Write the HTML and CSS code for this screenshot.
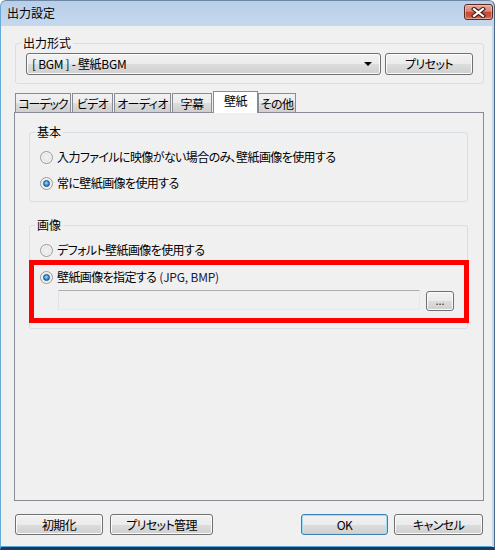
FILE: index.html
```html
<!DOCTYPE html>
<html lang="ja">
<head>
<meta charset="utf-8">
<title>出力設定</title>
<link rel="stylesheet" href="styles.css">
</head>
<body>
<div class="window">
  <div class="titlebar">
    <span class="title">出力設定</span>
    <div class="close">
      <svg width="17" height="11" viewBox="0 0 17 11">
        <path d="M4 2 L13 9 M13 2 L4 9" stroke="#3a1a14" stroke-width="4.2" stroke-linecap="square" fill="none"/>
        <path d="M4 2 L13 9 M13 2 L4 9" stroke="#ffffff" stroke-width="2.2" stroke-linecap="square" fill="none"/>
      </svg>
    </div>
  </div>
  <div class="client">
    <fieldset class="group top-group">
      <legend>出力形式</legend>
      <div class="format-row">
        <div class="combo">
          <span>[ BGM ] - 壁紙BGM</span>
          <span class="arrow"></span>
        </div>
        <div class="btn preset">プリセット</div>
      </div>
    </fieldset>

    <div class="tabs">
      <div class="tab w-codec">コーデック</div>
      <div class="tab w-video">ビデオ</div>
      <div class="tab w-audio">オーディオ</div>
      <div class="tab w-sub">字幕</div>
      <div class="tab selected">壁紙</div>
      <div class="tab w-other">その他</div>
    </div>
    <div class="panel">
      <fieldset class="group basic">
        <legend>基本</legend>
        <div class="radio-row"><span class="radio"></span><span>入力ファイルに映像がない場合のみ、壁紙画像を使用する</span></div>
        <div class="radio-row gap"><span class="radio checked"></span><span>常に壁紙画像を使用する</span></div>
      </fieldset>
      <fieldset class="group image">
        <legend>画像</legend>
        <div class="radio-row"><span class="radio"></span><span>デフォルト壁紙画像を使用する</span></div>
        <div class="radio-row gap2"><span class="radio checked"></span><span>壁紙画像を指定する<span class="ext">(JPG, BMP)</span></span></div>
        <div class="path-row">
          <div class="textbox"></div>
          <div class="btn browse">...</div>
        </div>
      </fieldset>
    </div>

    <div class="buttons">
      <div class="btn b-init">初期化</div>
      <div class="btn b-manage">プリセット管理</div>
      <div class="btn b-ok default">OK</div>
      <div class="btn b-cancel">キャンセル</div>
    </div>
  </div>
</div>
<div class="highlight"></div>
</body>
</html>
```
FILE: styles.css
```css
html, body {
  margin: 0;
  padding: 0;
  background: #ffffff;
}
body {
  width: 498px;
  height: 550px;
  position: relative;
  overflow: hidden;
  font-family: "Noto Sans CJK JP", "Noto Sans", sans-serif;
  font-size: 12px;
  line-height: 14px;
  letter-spacing: -0.6px;
  color: #000;
  font-feature-settings: "palt";
}
.window {
  width: 495px;
  height: 550px;
  box-sizing: border-box;
  display: flex;
  flex-direction: column;
  background: linear-gradient(#b9cfe8, #c5d9ee 26px, #c5d9ee);
  border-top: 1px solid #6c86a3;
  border-right: 1px solid #4c6783;
  border-left: 1px solid #69a9d8;
  border-bottom: 3px solid #1e3957;
  border-radius: 6px 6px 0 0;
}
.titlebar {
  height: 25px;
  display: flex;
  align-items: center;
  padding-left: 6px;
}
.title {
  font-size: 12px;
  line-height: 14px;
  margin-top: -1px;
  letter-spacing: 0;
}
.close {
  margin-left: auto;
  margin-right: 1px;
  margin-top: 3px;
  align-self: flex-start;
  width: 27px;
  height: 14px;
  border: 1px solid #5a2a22;
  border-radius: 3px;
  background: linear-gradient(#e4a79b 0%, #d98a7b 45%, #c24a36 50%, #c9543f 80%, #d97a62 100%);
  box-shadow: inset 0 0 0 1px rgba(255,220,210,0.45);
  display: flex;
  align-items: center;
  justify-content: center;
}
.close svg { display: block; }

.client {
  flex: 1;
  margin-right: 2px;
  background: #f0f0f0;
  border-bottom: 1px solid #56a7da;
  padding: 10px 8px 0 13px;
  display: flex;
  flex-direction: column;
}

.group {
  margin: 0;
  border: 1px solid #d5dfe5;
  border-radius: 3px;
  min-width: 0;
}
.group legend {
  padding: 0 2px;
  margin-left: -5px;
  line-height: 14px;
  letter-spacing: 0;
}
.top-group {
  margin-left: 1px;
  padding: 3px 9px 8px 10px;
}
.format-row {
  display: flex;
  gap: 4px;
}
.combo {
  width: 355px;
  height: 22px;
  box-sizing: border-box;
  border: 1px solid #707070;
  border-radius: 3px;
  background: linear-gradient(#f2f2f2 0%, #ebebeb 50%, #dddddd 51%, #cfcfcf 100%);
  box-shadow: inset 0 0 0 1px #fbfbfb;
  display: flex;
  align-items: center;
  padding: 0 5px 0 5px;
  letter-spacing: -0.3px;
}
.combo .arrow {
  margin-left: auto;
  width: 0;
  height: 0;
  border-left: 4px solid transparent;
  border-right: 4px solid transparent;
  border-top: 4px solid #000;
  margin-right: 3px;
}
.btn {
  box-sizing: border-box;
  border: 1px solid #707070;
  border-radius: 3px;
  background: linear-gradient(#f2f2f2 0%, #ebebeb 50%, #dddddd 51%, #cfcfcf 100%);
  box-shadow: inset 0 0 0 1px #fbfbfb;
  display: flex;
  align-items: center;
  justify-content: center;
  line-height: 14px;
  white-space: nowrap;
}
.preset {
  width: 88px;
  height: 22px;
}

.tabs {
  margin-top: 7px;
  margin-left: 1px;
  height: 21px;
  display: flex;
  align-items: flex-end;
}
.tab {
  height: 19px;
  box-sizing: border-box;
  border: 1px solid #898c95;
  border-bottom: none;
  background: linear-gradient(#f2f2f2 0%, #ebebeb 50%, #dddddd 51%, #cfcfcf 100%);
  display: flex;
  align-items: center;
  justify-content: center;
  margin-right: 1px;
  padding-top: 1px;
  white-space: nowrap;
  overflow: hidden;
}
.w-codec { width: 56px; letter-spacing: -1.1px; }
.w-video { width: 41px; }
.w-audio { width: 57px; }
.w-sub { width: 40px; }
.w-other { width: 38px; }
.tab.selected {
  width: 45px;
  height: 22px;
  margin-bottom: -1px;
  margin-right: 0;
  background: #ffffff;
  position: relative;
  z-index: 1;
  align-items: flex-start;
  padding-top: 2px;
}

.panel {
  height: 389px;
  box-sizing: border-box;
  border: 1px solid #898c95;
  background: #f0f0f0;
  padding: 12px 15px 0 14px;
}
.basic {
  padding: 10px 10px 10px 10px;
}
.image {
  margin-top: 16px;
  padding: 10px 10px 17px 10px;
}
.radio-row {
  height: 16px;
  display: flex;
  align-items: center;
  gap: 4px;
  white-space: nowrap;
}
.radio-row.gap { margin-top: 10px; }
.radio-row.gap2 { margin-top: 11px; }
.radio {
  width: 13px;
  height: 13px;
  box-sizing: border-box;
  border-radius: 50%;
  border: 1px solid #9a9a9a;
  background: radial-gradient(circle at 50% 50%, #f4f4f4 0%, #e6e6e6 55%, #d0d0d0 100%);
  box-shadow: inset 0 0 0 1px #f8f8f8;
  display: flex;
  align-items: center;
  justify-content: center;
  flex: none;
}
.radio.checked::after {
  content: "";
  width: 7px;
  height: 7px;
  box-sizing: border-box;
  border-radius: 50%;
  border: 1px solid #1d4f86;
  background: radial-gradient(circle at 45% 40%, #a6e0ff 0%, #3c9ee0 45%, #155a9e 100%);
}
.ext {
  color: #10204a;
  margin-left: 3px;
  letter-spacing: -0.2px;
}
.path-row {
  margin-top: 5px;
  margin-left: 18px;
  display: flex;
  align-items: flex-start;
  gap: 6px;
}
.textbox {
  width: 362px;
  height: 20px;
  box-sizing: border-box;
  border: 1px solid #e3e9ef;
  border-top-color: #abadb3;
  border-left-color: #e2e3ea;
  background: #f0f0f0;
}
.browse {
  width: 28px;
  height: 20px;
  margin-top: 1px;
  font-size: 11px;
  line-height: 10px;
  padding-bottom: 3px;
  color: #333;
  letter-spacing: 0;
}

.buttons {
  margin-top: 13px;
  display: flex;
  height: 21px;
}
.buttons .btn { height: 21px; }
.b-init { width: 88px; margin-left: 1px; }
.b-manage { width: 103px; margin-left: 7px; }
.b-ok { width: 87px; margin-left: auto; }
.b-cancel { width: 89px; margin-left: 6px; margin-right: 1px; }
.btn.default {
  border-color: #3c7fb1;
  box-shadow: inset 0 0 0 1px #9fdcf8;
}

.highlight {
  position: absolute;
  left: 29px;
  top: 260px;
  width: 440px;
  height: 63px;
  box-sizing: border-box;
  border: 5px solid #ff0000;
  pointer-events: none;
}
```
